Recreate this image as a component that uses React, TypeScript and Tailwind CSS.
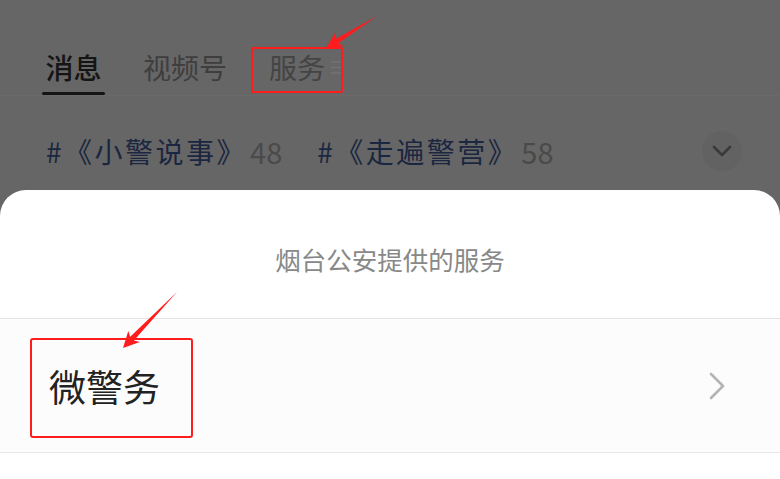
import React from "react";

type P = [number, number];

function arrowPoints(tail: P, tip: P, headLen: number, headHalf: number, shaftHalf: number): string {
  const dx = tip[0] - tail[0];
  const dy = tip[1] - tail[1];
  const len = Math.hypot(dx, dy);
  const ux = dx / len;
  const uy = dy / len;
  const px = -uy;
  const py = ux;
  const bx = tip[0] - ux * headLen;
  const by = tip[1] - uy * headLen;
  const sx = tip[0] - ux * (headLen - 3);
  const sy = tip[1] - uy * (headLen - 3);
  const pts: P[] = [
    [tail[0], tail[1]],
    [sx + px * shaftHalf, sy + py * shaftHalf],
    [bx + px * headHalf, by + py * headHalf],
    [tip[0], tip[1]],
    [bx - px * headHalf, by - py * headHalf],
    [sx - px * shaftHalf, sy - py * shaftHalf],
  ];
  return pts.map((p) => `${p[0].toFixed(1)},${p[1].toFixed(1)}`).join(" ");
}

export default function App() {
  const font = { fontFamily: '"Noto Sans CJK SC", "Noto Sans", sans-serif' };
  return (
    <div className="relative flex h-[479px] w-[780px] flex-col overflow-hidden bg-[#666666]" style={font}>
      {/* dimmed top content */}
      <div className="h-[190px] shrink-0">
        <div className="flex h-[96px] items-start border-b border-[#6a6a6a] pl-[42px] pt-[47px]">
          <div className="flex flex-col items-center">
            <span className="text-[28px] leading-[40px] font-medium text-[#151515]">消息</span>
            <span className="mt-[5px] h-[3px] w-[63px] rounded-full bg-[#141414]" />
          </div>
          <span className="ml-[38px] text-[28px] leading-[40px] text-[#3e3e3e]">视频号</span>
          <span className="ml-[42px] text-[28px] leading-[40px] text-[#444444]">服务</span>
          <svg width="14" height="40" viewBox="0 0 14 40" className="ml-[5px]">
            <g stroke="#727272" strokeWidth="1.6">
              <line x1="1" y1="15" x2="13" y2="15" />
              <line x1="1" y1="20.5" x2="13" y2="20.5" />
              <line x1="1" y1="26" x2="13" y2="26" />
            </g>
          </svg>
        </div>
        <div className="mt-[35px] flex items-center pl-[46px] pr-[38px]">
          <span className="text-[28px] leading-[40px] tracking-[2.5px] text-[#1b2640]">#《小警说事》</span>
          <span className="ml-[3px] text-[29px] leading-[40px] text-[#4a4a4a]">48</span>
          <span className="ml-[35px] text-[28px] leading-[40px] tracking-[2.5px] text-[#1b2640]">#《走遍警营》</span>
          <span className="ml-[3px] text-[29px] leading-[40px] text-[#4a4a4a]">58</span>
          <div className="ml-auto flex h-[40px] w-[40px] items-center justify-center rounded-full bg-[#626262]">
            <svg width="20" height="14" viewBox="0 0 20 14">
              <polyline points="2,3 10,11 18,3" fill="none" stroke="#3a3a3a" strokeWidth="2.6" strokeLinecap="round" strokeLinejoin="round" />
            </svg>
          </div>
        </div>
      </div>

      {/* bottom sheet */}
      <div className="flex flex-1 flex-col rounded-t-[26px] bg-white">
        <div className="h-[129px] shrink-0 border-b border-[#e4e4e4] pt-[51px] text-center text-[25.5px] leading-[36px] text-[#888888]">
          烟台公安提供的服务
        </div>
        <div className="flex h-[134px] shrink-0 items-center border-b border-[#e6e6e6] bg-[#fcfcfc] pl-[49px] pr-[54px]">
          <span className="text-[37px] leading-[48px] text-[#222222]">微警务</span>
          <svg width="18" height="28" viewBox="0 0 18 28" className="ml-auto">
            <polyline points="3,2 15,14 3,26" fill="none" stroke="#b4b4b4" strokeWidth="2.6" strokeLinecap="round" strokeLinejoin="round" />
          </svg>
        </div>
        <div className="flex-1 bg-white" />
      </div>

      {/* annotations */}
      <div className="pointer-events-none absolute left-[251px] top-[47px] h-[46px] w-[92px] rounded-[2px] border-[2.5px] border-[#ff1c1c]" />
      <div className="pointer-events-none absolute left-[30px] top-[338px] h-[100px] w-[163px] rounded-[3px] border-[2.5px] border-[#ff1c1c]" />
      <svg className="pointer-events-none absolute left-0 top-0" width="780" height="479" viewBox="0 0 780 479">
        <polygon points={arrowPoints([377, 16], [326, 48], 16, 8, 2.5)} fill="#ff1c1c" />
        <polygon points={arrowPoints([177, 292], [123, 348], 16, 8, 2.6)} fill="#ff1c1c" />
      </svg>
    </div>
  );
}
